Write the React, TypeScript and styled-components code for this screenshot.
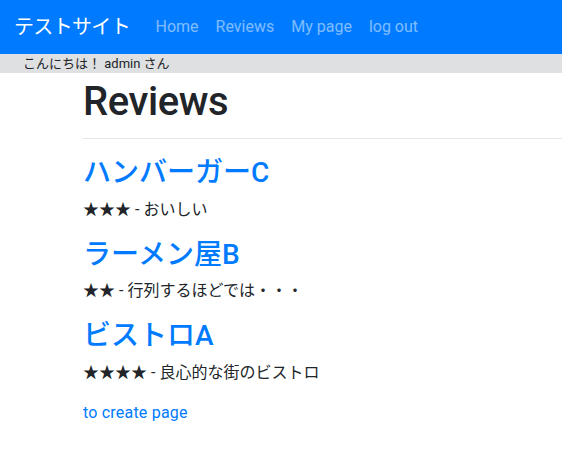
import React from "react";
import styled, { createGlobalStyle } from "styled-components";

const Global = createGlobalStyle`
  html, body { margin: 0; padding: 0; background: #fff; }
  body {
    font-family: Roboto, "Liberation Sans", "Noto Sans CJK JP", sans-serif;
    font-size: 16px;
    line-height: 1.5;
    color: #212529;
  }
  * { box-sizing: border-box; }
`;

const Navbar = styled.nav`
  display: flex;
  align-items: center;
  height: 54px;
  padding: 0 16px 0 14px;
  background: #007bff;
`;

const Brand = styled.a`
  font-size: 20px;
  line-height: 30px;
  color: #fff;
  margin-right: 17px;
  text-decoration: none;
  letter-spacing: -0.67px;
`;

const NavList = styled.div`
  display: flex;
  align-items: center;
`;

const NavLink = styled.a`
  display: block;
  padding: 8px 8.5px;
  font-size: 16px;
  line-height: 24px;
  color: rgba(255, 255, 255, 0.5);
  text-decoration: none;
`;

const Greeting = styled.div`
  background: #dfe0e2;
  height: 19px;
  padding-left: 23px;
  font-size: 13px;
  line-height: 19px;
  color: #212529;
`;

const Main = styled.main`
  padding-left: 83px;
`;

const Title = styled.h1`
  margin: 5px 0 0;
  font-size: 40px;
  font-weight: 500;
  line-height: 48px;
  letter-spacing: -0.4px;
`;

const Rule = styled.hr`
  margin: 12px 0 17px;
  border: 0;
  border-top: 1px solid rgba(0, 0, 0, 0.1);
`;

const ReviewTitle = styled.h3`
  margin: 0 0 8px;
  font-size: 28px;
  font-weight: 500;
  line-height: 33.6px;
  a { color: #007bff; text-decoration: none; }
`;

const ReviewText = styled.p`
  margin: 0 0 16px;
  font-size: 16px;
  line-height: 24px;
`;

const CreateLink = styled.a`
  display: inline-block;
  font-size: 16px;
  line-height: 24px;
  color: #007bff;
  text-decoration: none;
  letter-spacing: 0.2px;
`;

const reviews = [
  { name: "ハンバーガーC", stars: 3, text: "おいしい" },
  { name: "ラーメン屋B", stars: 2, text: "行列するほどでは・・・" },
  { name: "ビストロA", stars: 4, text: "良心的な街のビストロ" },
];

export default function App() {
  return (
    <>
      <Global />
      <Navbar>
        <Brand href="#">テストサイト</Brand>
        <NavList>
          <NavLink href="#">Home</NavLink>
          <NavLink href="#">Reviews</NavLink>
          <NavLink href="#">My page</NavLink>
          <NavLink href="#">log out</NavLink>
        </NavList>
      </Navbar>
      <Greeting>こんにちは！ admin さん</Greeting>
      <Main>
        <Title>Reviews</Title>
        <Rule />
        {reviews.map((r) => (
          <div key={r.name}>
            <ReviewTitle>
              <a href="#">{r.name}</a>
            </ReviewTitle>
            <ReviewText>
              {"★".repeat(r.stars)} - {r.text}
            </ReviewText>
          </div>
        ))}
        <CreateLink href="#">to create page</CreateLink>
      </Main>
    </>
  );
}
